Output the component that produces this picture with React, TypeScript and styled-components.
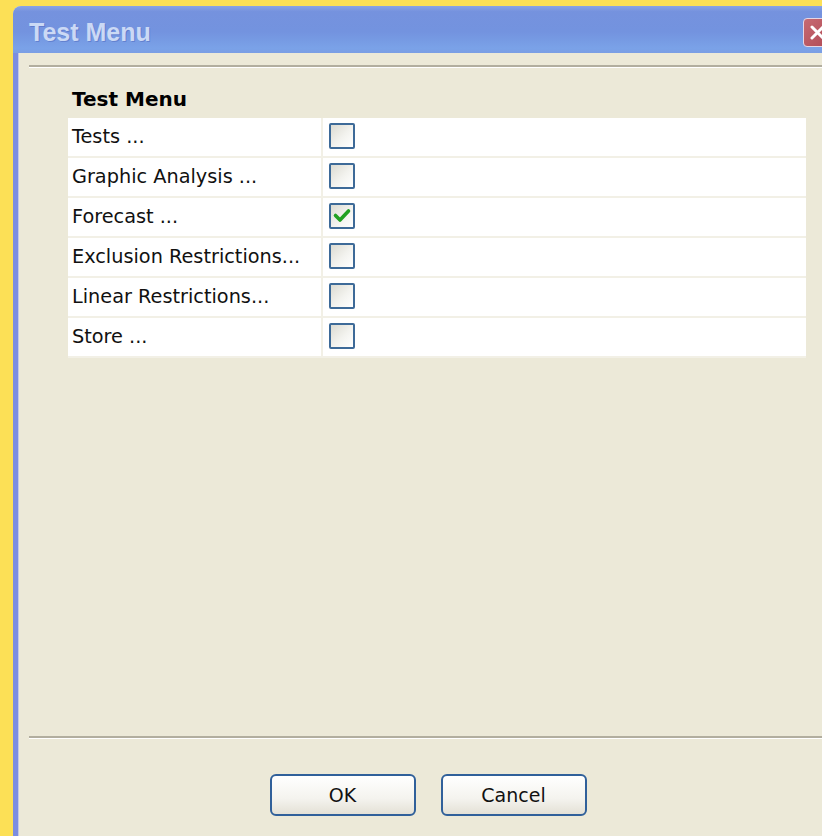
import React from "react";
import styled, { createGlobalStyle } from "styled-components";

const GlobalStyle = createGlobalStyle`
  html, body {
    margin: 0;
    padding: 0;
    overflow: hidden;
    background: #fce056;
  }
  body {
    font-family: "DejaVu Sans", Tahoma, sans-serif;
  }
`;

const Page = styled.div`
  width: 822px;
  height: 836px;
  overflow: hidden;
  padding: 6px 0 0 13px;
  box-sizing: border-box;
`;

const Window = styled.div`
  width: 832px;
  height: 830px;
  display: flex;
  flex-direction: column;
  background: #ece9d8;
  border-top-left-radius: 8px;
  overflow: hidden;
`;

const TitleBar = styled.div`
  height: 47px;
  flex: none;
  display: flex;
  align-items: center;
  justify-content: space-between;
  padding: 0 13px 0 16px;
  background: linear-gradient(
    to bottom,
    #8aa4e4 0%,
    #7592de 12%,
    #7393df 55%,
    #7aa2e8 90%,
    #7b9ee4 100%
  );
`;

const Title = styled.span`
  font-family: "Liberation Sans", Arial, sans-serif;
  font-weight: bold;
  font-size: 25px;
  color: #cbd9f5;
  text-shadow: 1px 1px 0 rgba(60, 80, 170, 0.35);
  margin-top: 6px;
`;

const CloseButton = styled.div`
  width: 27px;
  height: 27px;
  margin-top: 5px;
  border-radius: 4px;
  border: 1px solid #e6d6e4;
  background: linear-gradient(135deg, #c76a72, #b04a56);
  display: flex;
  align-items: center;
  justify-content: center;
`;

const Frame = styled.div`
  flex: 1;
  display: flex;
  border-left: 5px solid #7b8de0;
`;

const Body = styled.div`
  flex: 1;
  display: flex;
  flex-direction: column;
  padding: 12px 0 0 10px;
  border-left: 1px solid #c4c8e4;
`;

const Rule = styled.div`
  height: 2px;
  background: #b2ae9f;
  border-bottom: 1px solid #ffffff;
  flex: none;
`;

const Content = styled.div`
  flex: 1;
  padding: 19px 0 0 39px;
`;

const Heading = styled.div`
  font-weight: bold;
  font-size: 20px;
  line-height: 24px;
  color: #000;
  padding-left: 4px;
  margin-bottom: 7px;
`;

const Table = styled.div`
  width: 738px;
  display: grid;
  grid-template-columns: 253px 1fr;
  gap: 2px;
  background: #f2f0e6;
  padding: 0 0 2px 0;
`;

const LabelCell = styled.div`
  background: #fff;
  height: 38px;
  line-height: 38px;
  padding-left: 4px;
  font-size: 19.3px;
  color: #111;
  white-space: nowrap;
`;

const CheckCell = styled.div`
  background: #fff;
  height: 38px;
  display: flex;
  align-items: center;
  padding: 0 0 2px 6px;
  box-sizing: border-box;
`;

const Box = styled.div`
  width: 26px;
  height: 26px;
  box-sizing: border-box;
  border: 2px solid #3d6a98;
  border-radius: 2px;
  background: linear-gradient(135deg, #dcdbd2 0%, #f3f3ef 55%, #ffffff 100%);
  display: flex;
  align-items: center;
  justify-content: center;
`;

const ButtonRow = styled.div`
  height: 97px;
  flex: none;
  display: flex;
  justify-content: center;
  gap: 25px;
  padding-top: 35px;
  box-sizing: border-box;
  margin-left: -18px;
`;

const Button = styled.button`
  width: 146px;
  height: 42px;
  border: 2px solid #30609a;
  border-radius: 6px;
  background: linear-gradient(to bottom, #ffffff 0%, #f4f3ee 60%, #e4e1d6 100%);
  font-family: "DejaVu Sans", Tahoma, sans-serif;
  font-size: 19px;
  color: #111;
  padding: 0;
`;

const options = [
  { label: "Tests ...", checked: false },
  { label: "Graphic Analysis ...", checked: false },
  { label: "Forecast ...", checked: true },
  { label: "Exclusion Restrictions...", checked: false },
  { label: "Linear Restrictions...", checked: false },
  { label: "Store ...", checked: false },
];

function CheckMark() {
  return (
    <svg width="20" height="20" viewBox="0 0 20 20">
      <path
        d="M3.5 9.5 L8 14 L16.5 5"
        fill="none"
        stroke="#21a121"
        strokeWidth="3.6"
        strokeLinecap="round"
        strokeLinejoin="round"
      />
    </svg>
  );
}

export default function App() {
  return (
    <>
      <GlobalStyle />
      <Page>
        <Window>
          <TitleBar>
            <Title>Test Menu</Title>
            <CloseButton>
              <svg width="17" height="17" viewBox="0 0 17 17">
                <path
                  d="M3 3 L14 14 M14 3 L3 14"
                  stroke="#fff"
                  strokeWidth="3"
                  strokeLinecap="round"
                />
              </svg>
            </CloseButton>
          </TitleBar>
          <Frame>
            <Body>
              <Rule />
              <Content>
                <Heading>Test Menu</Heading>
                <Table>
                  {options.map((opt) => (
                    <React.Fragment key={opt.label}>
                      <LabelCell>{opt.label}</LabelCell>
                      <CheckCell>
                        <Box>{opt.checked && <CheckMark />}</Box>
                      </CheckCell>
                    </React.Fragment>
                  ))}
                </Table>
              </Content>
              <Rule />
              <ButtonRow>
                <Button>OK</Button>
                <Button>Cancel</Button>
              </ButtonRow>
            </Body>
          </Frame>
        </Window>
      </Page>
    </>
  );
}
